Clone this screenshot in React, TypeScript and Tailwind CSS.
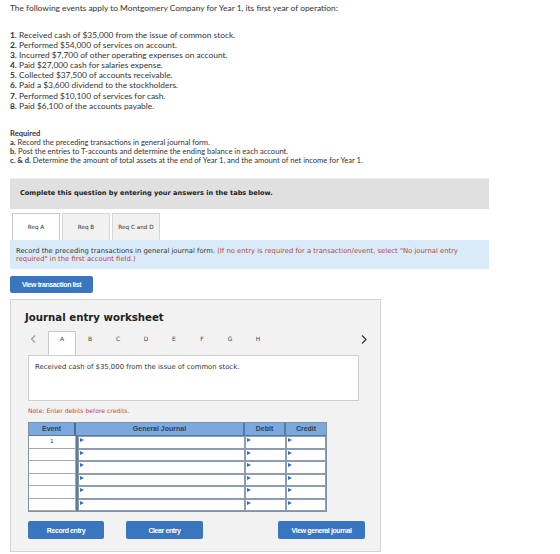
import React from "react";

const events = [
  "Received cash of $35,000 from the issue of common stock.",
  "Performed $54,000 of services on account.",
  "Incurred $7,700 of other operating expenses on account.",
  "Paid $27,000 cash for salaries expense.",
  "Collected $37,500 of accounts receivable.",
  "Paid a $3,600 dividend to the stockholders.",
  "Performed $10,100 of services for cash.",
  "Paid $6,100 of the accounts payable.",
];

const letters = ["A", "B", "C", "D", "E", "F", "G", "H"];

function Marker() {
  return (
    <svg width="4" height="4" viewBox="0 0 4 4" className="absolute left-[1px] top-[1px]">
      <polygon points="0,0 4,2 0,4" fill="#2f6fc2" />
    </svg>
  );
}

function InputCell({ w }: { w: string }) {
  return (
    <div className={`relative h-full ${w} border-[1.5px] border-[#8d9db1] bg-white`}>
      <Marker />
    </div>
  );
}

function BlueButton({ label, w, h = "h-[18px]" }: { label: string; w: string; h?: string }) {
  return (
    <button
      className={`${w} ${h} flex items-center justify-center rounded-[2px] bg-[#3a76c0] text-white font-bold text-[7px] leading-none tracking-[-0.4px] font-['Liberation_Sans',Arial,sans-serif]`}
    >
      {label}
    </button>
  );
}

export default function App() {
  return (
    <div className="w-[560px] h-[554px] overflow-hidden bg-white text-[#333] font-['Lato','Liberation_Sans',sans-serif]">
      <div className="pl-[10px] pt-[3px]">
        <p className="text-[8.4px] leading-[10px]">
          The following events apply to Montgomery Company for Year 1, its first year of operation:
        </p>
        <ol className="mt-[17px] text-[8.4px] leading-[10.1px]">
          {events.map((e, i) => (
            <li key={i}>
              <span className="font-bold">{i + 1}.</span> {e}
            </li>
          ))}
        </ol>
        <div className="mt-[18px] text-[7.6px] leading-[9.1px]">
          <p className="font-bold">Required</p>
          <p>
            <span className="font-bold">a.</span> Record the preceding transactions in general journal form.
          </p>
          <p>
            <span className="font-bold">b.</span> Post the entries to T-accounts and determine the ending balance in each account.
          </p>
          <p>
            <span className="font-bold">c. &amp; d.</span> Determine the amount of total assets at the end of Year 1, and the amount of net income for Year 1.
          </p>
        </div>
      </div>

      <div className="ml-[10px] w-[479px] font-['DejaVu_Sans',Verdana,sans-serif]">
        <div className="mt-[13px] border-t border-[#ececec] h-[31px] bg-[#e0e0e0] flex items-center pl-[10px]">
          <span className="text-[6.6px] font-bold text-[#222]">
            Complete this question by entering your answers in the tabs below.
          </span>
        </div>

        <div className="mt-[4px] flex gap-[2px] pl-[2px] h-[27px] text-[5.7px] text-[#333]">
          <div className="w-[48px] border border-b-0 border-[#c8c8c8] bg-white flex items-center justify-center">
            Req A
          </div>
          <div className="w-[48px] border border-b-0 border-[#d6d6d6] bg-[#f1f1f1] flex items-center justify-center">
            Req B
          </div>
          <div className="w-[48px] border border-b-0 border-[#d6d6d6] bg-[#f1f1f1] flex items-center justify-center">
            Req C and D
          </div>
        </div>

        <div className="h-[29px] bg-[#d9ebf8] pl-[6px] pr-[12px] pt-[7px] text-[6.8px] leading-[8px] text-[#333]">
          Record the preceding transactions in general journal form.{" "}
          <span className="text-[#b8453c]">
            (If no entry is required for a transaction/event, select "No journal entry required" in the first account field.)
          </span>
        </div>

        <div className="mt-[7px] flex">
          <BlueButton label="View transaction list" w="w-[83px]" h="h-[17px]" />
        </div>
      </div>

      <div className="ml-[10px] mt-[6px] w-[371px] h-[253px] bg-[#f2f2f2] border border-[#d4d4d4] pl-[17px] font-['DejaVu_Sans',Verdana,sans-serif]">
        <h2 className="pt-[12px] -ml-[3px] text-[10.2px] leading-[12px] font-bold text-[#222]">
          Journal entry worksheet
        </h2>

        <div className="mt-[7px] w-[336px] h-[24px] flex items-start text-[6px] leading-[8px] text-[#444]">
          <svg width="6" height="8" viewBox="0 0 6 8" className="ml-[2px] mr-[12px] mt-[4px]">
            <polyline points="5,0.5 1.5,4 5,7.5" fill="none" stroke="#9a9a9a" strokeWidth="1.1" />
          </svg>
          {letters.map((l, i) => (
            <div
              key={l}
              className={
                i === 0
                  ? "w-[28px] h-[24px] border border-b-0 border-[#c9c9c9] bg-white flex justify-center pt-[3px]"
                  : "w-[28px] h-[24px] flex justify-center pt-[4px]"
              }
            >
              {l}
            </div>
          ))}
          <div className="flex-1" />
          <svg width="6" height="9" viewBox="0 0 6 9" className="mr-[-3px] mt-[4px]">
            <polyline points="1,0.5 5,4.5 1,8.5" fill="none" stroke="#333" strokeWidth="1.2" />
          </svg>
        </div>

        <div className="w-[331px] h-[46px] bg-white border border-[#cfcfcf] pl-[6px] pt-[6px] text-[6.9px] text-[#333]">
          Received cash of $35,000 from the issue of common stock.
        </div>

        <p className="mt-[6px] text-[6.1px] leading-[8px] text-[#c0483e]">Note: Enter debits before credits.</p>

        <div className="mt-[7px] w-[299px] border border-[#7f92a8] font-['Liberation_Sans',Arial,sans-serif]">
          <div className="flex h-[13px] bg-[#7aa9df] text-[7px] font-bold text-[#34414f] border-b border-[#5f7896]">
            <div className="w-[47px] flex items-center justify-center border-r-2 border-[#4f6a89]">Event</div>
            <div className="w-[169px] flex items-center justify-center border-r-2 border-[#5d7898]">General Journal</div>
            <div className="w-[41px] flex items-center justify-center border-r-2 border-[#5d7898]">Debit</div>
            <div className="flex-1 flex items-center justify-center">Credit</div>
          </div>
          {[0, 1, 2, 3, 4, 5].map((r) => (
            <div key={r} className="flex h-[12.5px] bg-[#b9c4d1]">
              <div className="w-[47px] bg-white border-b border-r border-[#a9a9a9] flex items-center justify-center text-[6px] text-[#333]">
                {r === 0 ? "1" : ""}
              </div>
              <div className="w-[2px] h-full bg-[#61799a]" />
              <InputCell w="w-[167px]" />
              <InputCell w="w-[41px]" />
              <InputCell w="flex-1" />
            </div>
          ))}
        </div>

        <div className="mt-[9px] flex w-[337px]">
          <BlueButton label="Record entry" w="w-[76px]" />
          <div className="w-[22px]" />
          <BlueButton label="Clear entry" w="w-[77px]" />
          <div className="flex-1" />
          <BlueButton label="View general journal" w="w-[87px]" />
        </div>
      </div>
    </div>
  );
}
